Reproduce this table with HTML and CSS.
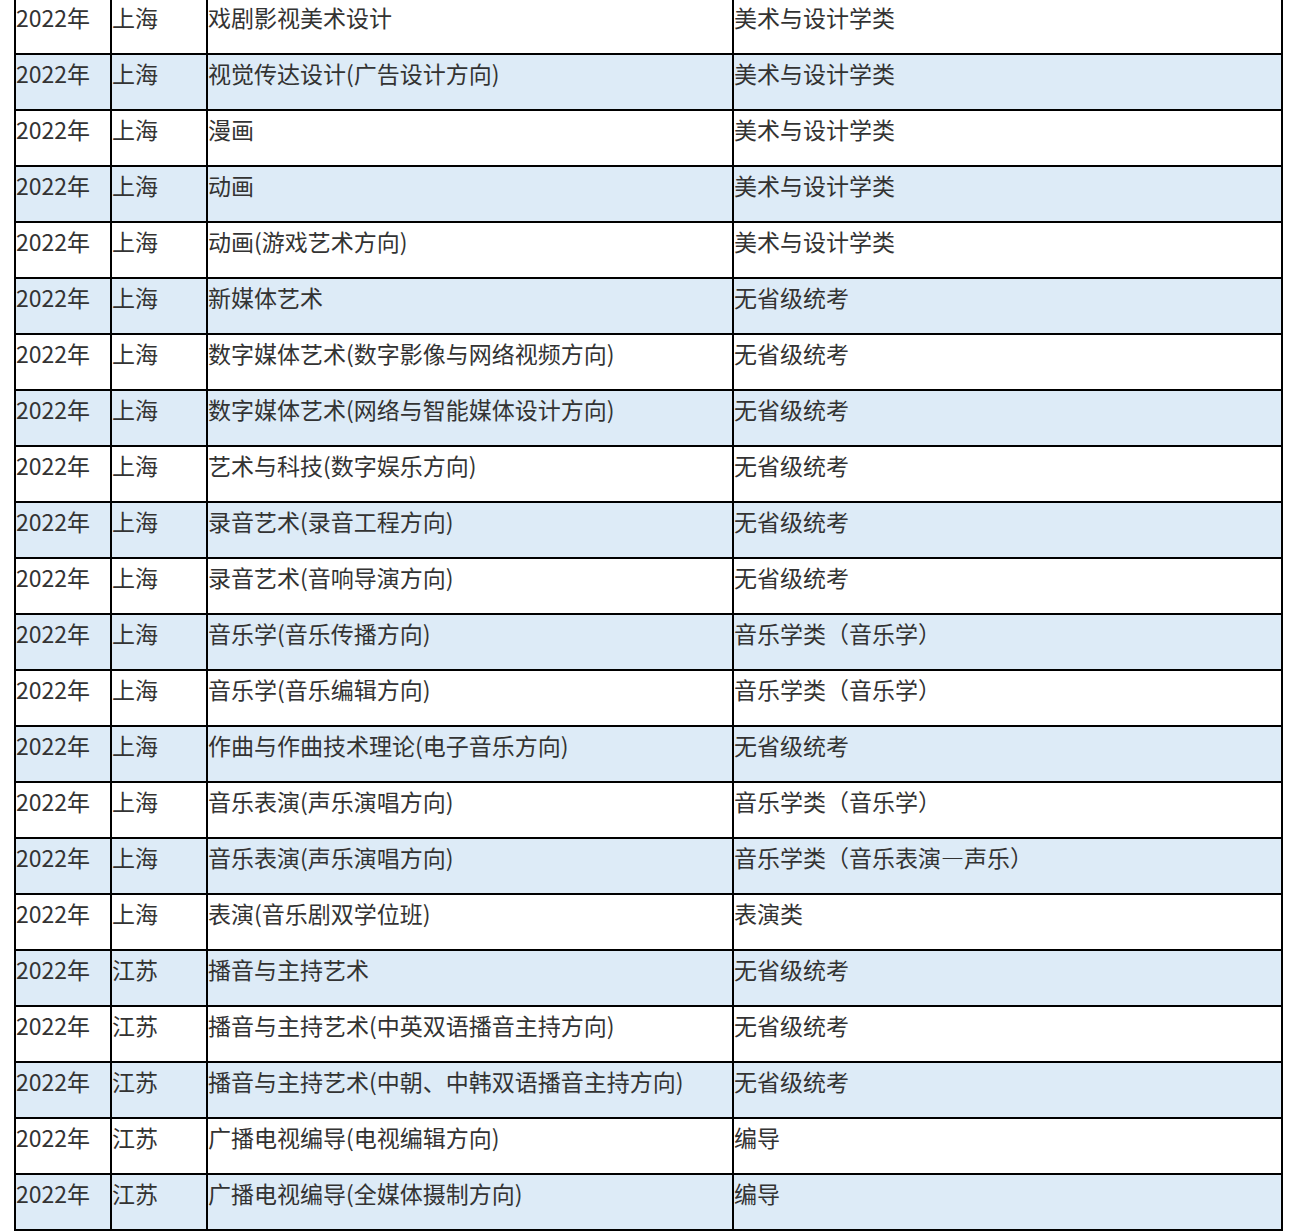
FILE: index.html
```html
<!DOCTYPE html>
<html lang="zh-CN">
<head>
<meta charset="utf-8">
<title>专业列表</title>
<link rel="stylesheet" href="styles.css">
</head>
<body>
<table class="grid">
<colgroup><col class="c-year"><col class="c-prov"><col class="c-major"><col class="c-cat"></colgroup>
<tbody>
<tr><td>2022年</td><td>上海</td><td>戏剧影视美术设计</td><td>美术与设计学类</td></tr>
<tr class="alt"><td>2022年</td><td>上海</td><td>视觉传达设计(广告设计方向)</td><td>美术与设计学类</td></tr>
<tr><td>2022年</td><td>上海</td><td>漫画</td><td>美术与设计学类</td></tr>
<tr class="alt"><td>2022年</td><td>上海</td><td>动画</td><td>美术与设计学类</td></tr>
<tr><td>2022年</td><td>上海</td><td>动画(游戏艺术方向)</td><td>美术与设计学类</td></tr>
<tr class="alt"><td>2022年</td><td>上海</td><td>新媒体艺术</td><td>无省级统考</td></tr>
<tr><td>2022年</td><td>上海</td><td>数字媒体艺术(数字影像与网络视频方向)</td><td>无省级统考</td></tr>
<tr class="alt"><td>2022年</td><td>上海</td><td>数字媒体艺术(网络与智能媒体设计方向)</td><td>无省级统考</td></tr>
<tr><td>2022年</td><td>上海</td><td>艺术与科技(数字娱乐方向)</td><td>无省级统考</td></tr>
<tr class="alt"><td>2022年</td><td>上海</td><td>录音艺术(录音工程方向)</td><td>无省级统考</td></tr>
<tr><td>2022年</td><td>上海</td><td>录音艺术(音响导演方向)</td><td>无省级统考</td></tr>
<tr class="alt"><td>2022年</td><td>上海</td><td>音乐学(音乐传播方向)</td><td>音乐学类（音乐学）</td></tr>
<tr><td>2022年</td><td>上海</td><td>音乐学(音乐编辑方向)</td><td>音乐学类（音乐学）</td></tr>
<tr class="alt"><td>2022年</td><td>上海</td><td>作曲与作曲技术理论(电子音乐方向)</td><td>无省级统考</td></tr>
<tr><td>2022年</td><td>上海</td><td>音乐表演(声乐演唱方向)</td><td>音乐学类（音乐学）</td></tr>
<tr class="alt"><td>2022年</td><td>上海</td><td>音乐表演(声乐演唱方向)</td><td>音乐学类（音乐表演—声乐）</td></tr>
<tr><td>2022年</td><td>上海</td><td>表演(音乐剧双学位班)</td><td>表演类</td></tr>
<tr class="alt"><td>2022年</td><td>江苏</td><td>播音与主持艺术</td><td>无省级统考</td></tr>
<tr><td>2022年</td><td>江苏</td><td>播音与主持艺术(中英双语播音主持方向)</td><td>无省级统考</td></tr>
<tr class="alt"><td>2022年</td><td>江苏</td><td>播音与主持艺术(中朝、中韩双语播音主持方向)</td><td>无省级统考</td></tr>
<tr><td>2022年</td><td>江苏</td><td>广播电视编导(电视编辑方向)</td><td>编导</td></tr>
<tr class="alt"><td>2022年</td><td>江苏</td><td>广播电视编导(全媒体摄制方向)</td><td>编导</td></tr>
</tbody>
</table>
</body>
</html>
```
FILE: styles.css
```css
html {
  overflow: hidden;
}
body {
  margin: 0;
  background: #ffffff;
  font-family: "Noto Sans CJK SC", "Noto Sans", sans-serif;
  color: #333333;
}
.grid {
  margin: -3px 0 0 14px;
  width: 1269px;
  table-layout: fixed;
  border-collapse: separate;
  border-spacing: 0;
  border-top: 2px solid #000000;
  border-left: 2px solid #000000;
  box-sizing: border-box;
}
.c-year { width: 96px; }
.c-prov { width: 96px; }
.c-major { width: 526px; }
.c-cat { width: 549px; }
.grid td {
  box-sizing: border-box;
  height: 56px;
  padding: 2px 0 0 0;
  vertical-align: top;
  border-right: 2px solid #000000;
  border-bottom: 2px solid #000000;
  font-size: 23px;
  line-height: 33px;
  white-space: nowrap;
  overflow: hidden;
}
.grid tr.alt td {
  background: #ddebf7;
}
```
